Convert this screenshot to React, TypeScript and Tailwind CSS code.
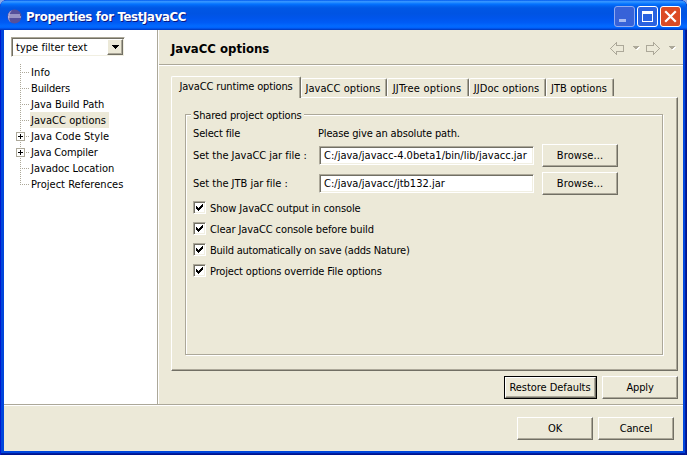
import React from "react";

const raised =
  "border border-t-white border-l-white border-r-[#716f64] border-b-[#716f64] shadow-[inset_-1px_-1px_0_#aca899] bg-[#ece9d8]";
const sunken =
  "border border-t-[#aca899] border-l-[#aca899] border-r-white border-b-white shadow-[inset_1px_1px_0_#716f64,inset_-1px_-1px_0_#f1efe2] bg-white";

function Button({ label, className = "" }: { label: string; className?: string }) {
  return (
    <button className={`flex h-[23px] w-[76px] shrink-0 items-center justify-center ${raised} ${className}`}>
      {label}
    </button>
  );
}

const tree = [
  { label: "Info", t: "tracking-[0.1px]" },
  { label: "Builders", t: "tracking-[-0.15px]" },
  { label: "Java Build Path", t: "tracking-[-0.03px]" },
  { label: "JavaCC options", t: "tracking-[0.05px]", selected: true },
  { label: "Java Code Style", t: "tracking-[0.05px]", closed: true },
  { label: "Java Compiler", t: "tracking-[-0.15px]", closed: true },
  { label: "Javadoc Location", t: "tracking-[-0.03px]" },
  { label: "Project References", t: "tracking-[0.03px]", last: true },
];

function TreeRow({ item }: { item: { label: string; t: string; selected?: boolean; closed?: boolean; last?: boolean } }) {
  return (
    <li className="flex h-4 items-center">
      <svg className="h-4 w-[14px] shrink-0" viewBox="0 0 14 16" shapeRendering="crispEdges">
        <path d={item.last ? "M4.5 0V9" : "M4.5 0V16"} stroke="#aca899" strokeDasharray="1 1" />
        <path d="M4 8.5H13" stroke="#aca899" strokeDasharray="1 1" />
        {item.closed && (
          <g>
            <rect x=".5" y="4.5" width="8" height="8" fill="#fff" stroke="#aca899" />
            <path d="M2 8.5H7M4.5 6V11" stroke="#000" />
          </g>
        )}
      </svg>
      <span className={`flex h-4 items-center whitespace-nowrap px-px pt-px ${item.t} ${item.selected ? "w-[79px] bg-[#ece9d8]" : ""}`}>
        {item.label}
      </span>
    </li>
  );
}

function Arrow({ flip = false }: { flip?: boolean }) {
  return (
    <svg className={`h-[13px] w-[14px] ${flip ? "-scale-x-100" : ""}`} viewBox="0 0 14 13" shapeRendering="crispEdges">
      <path d="M.5 6.5 6.5 .5V3.5H13.5V9.5H6.5V12.5Z" fill="#ece9d8" stroke="#aca899" />
    </svg>
  );
}

function Caret() {
  return (
    <svg className="h-[5px] w-[7px]" viewBox="0 0 7 5" shapeRendering="crispEdges">
      <path d="M1 1H7L4 4.5Z" fill="#fff" />
      <path d="M0 0H6V1H5V2H4V3H2V2H1V1H0Z" fill="#aca899" />
    </svg>
  );
}

function FileRow({ label, value, t }: { label: string; value: string; t: string }) {
  return (
    <div className="flex h-7 items-start">
      <span className="mt-[5px] w-[126px] whitespace-nowrap tracking-[-0.02px]">{label}</span>
      <div className={`mt-[2px] flex h-[19px] w-[215px] items-center whitespace-nowrap pl-1 pt-px ${t} ${sunken}`}>{value}</div>
      <Button label="Browse..." className="ml-[8px] tracking-[0.1px]" />
    </div>
  );
}

function Check({ label, t }: { label: string; t: string }) {
  return (
    <label className="flex h-[21px] items-start">
      <span className={`size-[13px] shrink-0 ${sunken}`}>
        <svg className="block size-[11px]" viewBox="0 0 11 11" shapeRendering="crispEdges">
          <path d="M2 4h1v1h1v1h1v-1h1v-1h1v-1h1v-1h1v3h-1v1h-1v1h-1v1h-1v1h-1v-1h-1v-1h-1z" fill="#000" />
        </svg>
      </span>
      <span className={`ml-1 mt-px whitespace-nowrap leading-[14px] ${t}`}>{label}</span>
    </label>
  );
}

const tabs = [
  { label: "JavaCC options", w: "w-[86px]", t: "tracking-[0.05px]" },
  { label: "JJTree options", w: "w-[82px]", t: "tracking-[0.2px]" },
  { label: "JJDoc options", w: "w-[77px]", t: "tracking-[0.08px]" },
  { label: "JTB options", w: "w-[68px]", t: "tracking-[0.05px]" },
];

export default function App() {
  return (
    <div className="h-[455px] w-[687px] overflow-hidden bg-[#8aa9e8] font-['DejaVu_Sans_Condensed','DejaVu_Sans',sans-serif] text-[11px] leading-[14px] tracking-[-0.15px] text-black">
      <div className="flex h-full w-full flex-col rounded-t-[7px] bg-[#0046dc] px-[4px] pb-[4px] shadow-[inset_1px_0_0_#0019cf,inset_-1px_0_0_#00138c,inset_-2px_0_0_#001ea0,inset_0_-1px_0_#00138c,inset_0_-2px_0_#001ea0]">
        <header className="-mx-[4px] flex h-[30px] shrink-0 items-center rounded-t-[7px] bg-[linear-gradient(180deg,#0058ee_0%,#3593ff_5%,#288eff_8%,#127dff_11%,#036ffc_15%,#0262ee_20%,#0057e5_27%,#0054e3_45%,#0055eb_60%,#005bf5_75%,#026afe_87%,#0061fc_93%,#0040cb_98%,#003dbd_100%)] pl-[7px] pr-[6px]">
          <svg className="mt-[2px] size-[15px]" viewBox="0 0 15 15">
            <circle cx="7.5" cy="7.5" r="7" fill="#56509a" />
            <path d="M1.2 5A7 7 0 0 1 5 1.2 10 10 0 0 0 3.5 13.2 7 7 0 0 1 1.2 10Z" fill="#aaa3d5" />
            <path d="M2 6h11M1 8h13" stroke="#dcd9f0" strokeWidth="1" />
          </svg>
          <h1 className="ml-[4px] mt-[4px] whitespace-nowrap text-[13px] font-bold leading-4 tracking-[-0.3px] text-white [text-shadow:1px_1px_0_#0a1883]">
            Properties for TestJavaCC
          </h1>
          <div className="ml-auto mt-[3px] flex gap-[2px]">
            <svg className="size-[21px]" viewBox="0 0 21 21">
              <rect x=".5" y=".5" width="20" height="20" rx="2.5" fill="#3762d8" stroke="#90aaf0" />
              <path d="M5 13h7v3H5z" fill="#a7baf0" />
            </svg>
            <svg className="size-[21px]" viewBox="0 0 21 21">
              <rect x=".5" y=".5" width="20" height="20" rx="2.5" fill="#2b62e0" stroke="#fff" />
              <path d="M5 5h11v11H5zM6 8v7h9V8z" fill="#fff" fillRule="evenodd" />
            </svg>
            <svg className="size-[21px]" viewBox="0 0 21 21">
              <rect x=".5" y=".5" width="20" height="20" rx="2.5" fill="#dc4b25" stroke="#fff" />
              <path d="M6 6l9 9M15 6l-9 9" stroke="#fff" strokeWidth="2.2" strokeLinecap="square" />
            </svg>
          </div>
        </header>

        <div className="flex h-[421px] flex-col bg-[#ece9d8]">
          <div className="flex h-[374px]">
            <aside className="w-[153px] shrink-0 bg-white pl-[7px] pt-[7px]">
              <div className={`flex h-5 w-[114px] items-center justify-between pl-1 pr-px ${sunken}`}>
                <span className="mt-px tracking-[0.03px]">type filter text</span>
                <span className={`flex h-4 w-[16px] items-center justify-center ${raised}`}>
                  <svg className="h-1 w-[7px]" viewBox="0 0 7 4" shapeRendering="crispEdges">
                    <path d="M0 0H7V1H6V2H5V3H4V4H3V3H2V2H1V1H0Z" />
                  </svg>
                </span>
              </div>
              <ul className="ml-[5px] mt-[7px]">
                {tree.map((t) => (
                  <TreeRow key={t.label} item={t} />
                ))}
              </ul>
            </aside>
            <div className="w-[2px] border-l border-[#aca899] bg-white" />
            <main className="flex flex-1 flex-col">
              <div className="flex h-[36px] items-center justify-between border-b border-white pl-3 pr-[7px] shadow-[inset_0_-1px_0_#aca899]">
                <h2 className="mt-[2px] text-[13px] font-bold tracking-[0px]">JavaCC options</h2>
                <div className="mt-px flex items-center">
                  <Arrow />
                  <span className="ml-[9px] mr-[6px]"><Caret /></span>
                  <Arrow flip />
                  <span className="ml-[9px]"><Caret /></span>
                </div>
              </div>

              <div className="ml-3 mt-[10px] w-[507px]">
                <div className="flex h-[21px] items-end">
                  <div className="relative z-10 -mb-px flex h-[22px] w-[130px] items-center justify-center whitespace-nowrap rounded-t-[2px] border-l border-t border-r border-white border-r-[#716f64] bg-[#ece9d8] pb-px shadow-[inset_-1px_0_0_#aca899]">
                    JavaCC runtime options
                  </div>
                  {tabs.map((t) => (
                    <div
                      key={t.label}
                      className={`flex h-[18px] ${t.w} ${t.t} mb-px items-center justify-center whitespace-nowrap rounded-t-[2px] border-l border-r border-t border-white border-r-[#716f64] pr-[2px] pt-[2px] shadow-[inset_-1px_0_0_#aca899]`}
                    >
                      {t.label}
                    </div>
                  ))}
                </div>
                <div className={`h-[274px] pl-[13px] pt-[9px] ${raised}`}>
                  <fieldset className="h-[249px] w-[478px]">
                    <div className="-mb-[7px] flex h-[14px]">
                      <legend className="relative z-10 ml-[6px] mt-[2px] h-[14px] whitespace-nowrap bg-[#ece9d8] px-[2px]">Shared project options</legend>
                    </div>
                    <div className="h-[241px] border border-[#aca899] pl-[7px] pt-[12px] shadow-[inset_1px_1px_0_#fff,1px_1px_0_#fff]">
                      <div className="flex h-[17px]">
                        <span className="w-[125px]">Select file</span>
                        <span>Please give an absolute path.</span>
                      </div>
                      <FileRow label="Set the JavaCC jar file :" value="C:/java/javacc-4.0beta1/bin/lib/javacc.jar" t="tracking-[0.02px]" />
                      <FileRow label="Set the JTB jar file :" value="C:/java/javacc/jtb132.jar" t="tracking-[0.02px]" />
                      <div className="mt-px">
                        <Check label="Show JavaCC output in console" t="tracking-[-0.1px]" />
                        <Check label="Clear JavaCC console before build" t="tracking-[-0.1px]" />
                        <Check label="Build automatically on save (adds Nature)" t="tracking-[-0.22px]" />
                        <Check label="Project options override File options" t="tracking-[-0.14px]" />
                      </div>
                    </div>
                  </fieldset>
                </div>
                <div className="mt-[5px] flex justify-end gap-[5px]">
                  <div className="h-[23px] w-[93px] border border-black">
                    <div className={`flex h-[21px] items-center justify-center whitespace-nowrap pr-px tracking-[-0.05px] ${raised}`}>Restore Defaults</div>
                  </div>
                  <Button label="Apply" />
                </div>
              </div>
            </main>
          </div>
          <footer className="flex flex-1 justify-end gap-[5px] border-t border-[#aca899] pr-[9px] pt-[12px] shadow-[inset_0_1px_0_#fff]">
            <Button label="OK" />
            <Button label="Cancel" />
          </footer>
        </div>
      </div>
    </div>
  );
}
